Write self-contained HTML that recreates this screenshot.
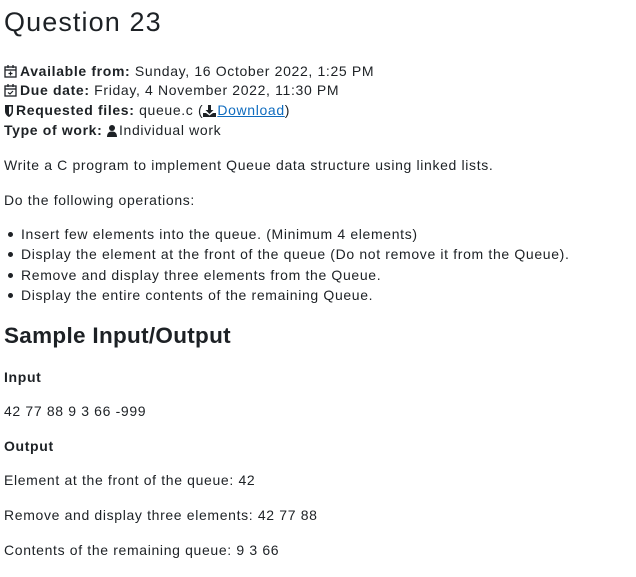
<!DOCTYPE html>
<html><head><style>
body{margin:0;width:636px;height:577px;background:#fff;font-family:"Liberation Sans",sans-serif;color:#1d2125;position:relative;overflow:hidden}
.l{position:absolute;left:4px;white-space:nowrap;font-size:14px;letter-spacing:0.65px;line-height:18px}
b{font-weight:600}
.ic{display:inline-block;vertical-align:-2px;margin-right:3px}
a{color:#0f6cbf}
.dot{position:absolute;left:8px;width:5px;height:5px;border-radius:50%;background:#1d2125}
</style></head><body>
<div class="l" style="top:5px;font-size:27px;line-height:34px;letter-spacing:1.1px;color:#1d2125">Question 23</div>
<div class="l" style="top:62px"><svg class="ic" width="13" height="13" viewBox="0 0 13 13"><rect x="1" y="2" width="11" height="10" fill="none" stroke="#1d2125" stroke-width="1.3"/><line x1="1" y1="5" x2="12" y2="5" stroke="#1d2125" stroke-width="1.3"/><line x1="4" y1="0" x2="4" y2="3" stroke="#1d2125" stroke-width="1.3"/><line x1="9" y1="0" x2="9" y2="3" stroke="#1d2125" stroke-width="1.3"/><path d="M6.5 6.5v4M4.5 8.5h4" stroke="#1d2125" stroke-width="1.2"/></svg><b>Available from:</b> Sunday, 16 October 2022, 1:25 PM</div>
<div class="l" style="top:81px"><svg class="ic" width="13" height="13" viewBox="0 0 13 13"><rect x="1" y="2" width="11" height="10" fill="none" stroke="#1d2125" stroke-width="1.3"/><line x1="1" y1="5" x2="12" y2="5" stroke="#1d2125" stroke-width="1.3"/><line x1="4" y1="0" x2="4" y2="3" stroke="#1d2125" stroke-width="1.3"/><line x1="9" y1="0" x2="9" y2="3" stroke="#1d2125" stroke-width="1.3"/><path d="M4 8.5l2 1.5 3-3" fill="none" stroke="#1d2125" stroke-width="1.2"/></svg><b>Due date:</b> Friday, 4 November 2022, 11:30 PM</div>
<div class="l" style="top:101px"><svg class="ic" width="10" height="13" viewBox="0 0 10 13" style="margin-right:2px"><path d="M1 1h8v6c0 3-2 5-4 6C3 12 1 10 1 7z" fill="#1d2125"/><path d="M5 2.5h2.5v4.5c0 2-1 3-2.5 3.8z" fill="#fff"/></svg><b>Requested files:</b> queue.c (<svg class="ic" width="13" height="12" viewBox="0 0 13 12" style="margin-right:1px"><path d="M5 0h3v5h2.5L6.5 9 2.5 5H5z" fill="#1d2125"/><path d="M0 8h3l3.5 2.5L10 8h3v4H0z" fill="#1d2125"/></svg><a href="#">Download</a>)</div>
<div class="l" style="top:121px"><b>Type of work:</b> <svg class="ic" width="10" height="12" viewBox="0 0 10 12" style="margin-right:2px"><circle cx="5" cy="3" r="3" fill="#1d2125"/><path d="M0 12c0-4 2-5.5 5-5.5s5 1.5 5 5.5z" fill="#1d2125"/></svg>Individual work</div>
<div class="l" style="top:156px">Write a C program to implement Queue data structure using linked lists.</div>
<div class="l" style="top:191px">Do the following operations:</div>
<div class="dot" style="top:232px"></div><div class="l" style="left:21px;top:225px">Insert few elements into the queue. (Minimum 4 elements)</div>
<div class="dot" style="top:252px"></div><div class="l" style="left:21px;top:245px">Display the element at the front of the queue (Do not remove it from the Queue).</div>
<div class="dot" style="top:273px"></div><div class="l" style="left:21px;top:266px">Remove and display three elements from the Queue.</div>
<div class="dot" style="top:293px"></div><div class="l" style="left:21px;top:286px">Display the entire contents of the remaining Queue.</div>
<div class="l" style="top:322px;font-size:22.5px;line-height:28px;font-weight:600;letter-spacing:0.3px">Sample Input/Output</div>
<div class="l" style="top:368px"><b>Input</b></div>
<div class="l" style="top:402px">42 77 88 9 3 66 -999</div>
<div class="l" style="top:437px"><b>Output</b></div>
<div class="l" style="top:471px">Element at the front of the queue: 42</div>
<div class="l" style="top:506px">Remove and display three elements: 42 77 88</div>
<div class="l" style="top:541px">Contents of the remaining queue: 9 3 66</div>
</body></html>
